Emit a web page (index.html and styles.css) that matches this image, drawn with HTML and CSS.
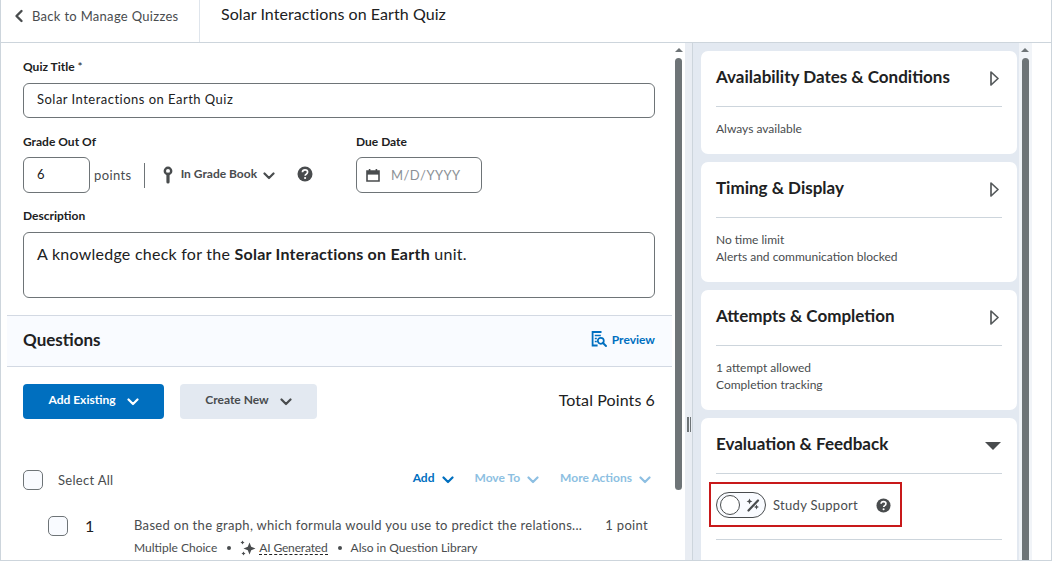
FILE: index.html
```html
<!DOCTYPE html>
<html lang="en">
<head>
<meta charset="utf-8">
<title>Solar Interactions on Earth Quiz</title>
<link rel="stylesheet" href="styles.css">
</head>
<body>
<div class="app">
  <header class="topbar">
    <a class="back">
      <svg class="back-icon" viewBox="0 0 10 14"><path d="M7.500 2 2.500 7l5 5" fill="none" stroke="#494c4e" stroke-width="2.400" stroke-linecap="round" stroke-linejoin="round"/></svg>
      <span>Back to Manage Quizzes</span>
    </a>
    <h1 class="page-title">Solar Interactions on Earth Quiz</h1>
  </header>
  <div class="main">
    <section class="left">
      <div class="left-scroll">
        <div class="form">
          <label class="label label-title">Quiz Title <span class="star">*</span></label>
          <div class="input input-title">Solar Interactions on Earth Quiz</div>
          <div class="grade-row">
            <div class="grade-col">
              <label class="label">Grade Out Of</label>
              <div class="grade-controls">
                <div class="input input-grade">6</div>
                <span class="points">points</span>
                <span class="vsep"></span>
                <svg class="pin" viewBox="0 0 10 18"><circle cx="5" cy="5" r="3.200" fill="none" stroke="#494c4e" stroke-width="2.400"/><path d="M5 8v8" stroke="#494c4e" stroke-width="3.200" stroke-linecap="round"/></svg>
                <span class="gradebook">In Grade Book</span>
                <svg class="chev" viewBox="0 0 12 8"><path d="M1.500 1.500 6 6l4.500-4.500" fill="none" stroke="#494c4e" stroke-width="2.200" stroke-linecap="round" stroke-linejoin="round"/></svg>
                <svg class="help help-grade" viewBox="0 0 16 16"><use href="#help"/></svg>
              </div>
            </div>
            <div class="due-col">
              <label class="label">Due Date</label>
              <div class="input input-date">
                <svg class="cal" viewBox="0 0 14 14"><path d="M1 3h12v10H1z" fill="none" stroke="#494c4e" stroke-width="1.600"/><path d="M1 3h12v3.600H1z" fill="#494c4e"/><path d="M3.600 1v2.600M10.400 1v2.600" stroke="#494c4e" stroke-width="1.600"/></svg>
                <span class="placeholder">M/D/YYYY</span>
              </div>
            </div>
          </div>
          <label class="label label-desc">Description</label>
          <div class="input input-desc">A knowledge check for the <b>Solar Interactions on Earth</b> unit.</div>
        </div>
        <div class="band">
          <h2 class="band-title">Questions</h2>
          <a class="preview">
            <svg class="preview-icon" viewBox="0 0 16 16"><path d="M10.500 1H1.600v13.500h5" fill="none" stroke="#006fbf" stroke-width="1.800"/><path d="M3.800 4.600h6M3.800 7.600h2M3.800 10.600h2" stroke="#006fbf" stroke-width="1.500"/><circle cx="9.800" cy="9.800" r="3" fill="none" stroke="#006fbf" stroke-width="1.700"/><path d="m12 12 3 3" stroke="#006fbf" stroke-width="1.900" stroke-linecap="round"/></svg>
            Preview
          </a>
        </div>
        <div class="actions">
          <button class="btn btn-primary">Add Existing
            <svg class="btn-chev" viewBox="0 0 12 8"><path d="M1.500 1.500 6 6l4.500-4.500" fill="none" stroke="#fff" stroke-width="2.200" stroke-linecap="round" stroke-linejoin="round"/></svg>
          </button>
          <button class="btn btn-secondary">Create New
            <svg class="btn-chev" viewBox="0 0 12 8"><path d="M1.500 1.500 6 6l4.500-4.500" fill="none" stroke="#494c4e" stroke-width="2.200" stroke-linecap="round" stroke-linejoin="round"/></svg>
          </button>
          <span class="total">Total Points 6</span>
        </div>
        <div class="select-row">
          <span class="check"></span>
          <span class="select-label">Select All</span>
          <div class="menu">
            <a class="menu-item">Add<svg class="menu-chev" viewBox="0 0 12 8"><path d="M1.500 1.500 6 6l4.500-4.500" fill="none" stroke="#006fbf" stroke-width="2.200" stroke-linecap="round" stroke-linejoin="round"/></svg></a>
            <a class="menu-item is-disabled">Move To<svg class="menu-chev" viewBox="0 0 12 8"><path d="M1.500 1.500 6 6l4.500-4.500" fill="none" stroke="#8dbfe2" stroke-width="2.200" stroke-linecap="round" stroke-linejoin="round"/></svg></a>
            <a class="menu-item is-disabled">More Actions<svg class="menu-chev" viewBox="0 0 12 8"><path d="M1.500 1.500 6 6l4.500-4.500" fill="none" stroke="#8dbfe2" stroke-width="2.200" stroke-linecap="round" stroke-linejoin="round"/></svg></a>
          </div>
        </div>
        <div class="q-row">
          <span class="check"></span>
          <span class="q-num">1</span>
          <div class="q-body">
            <div class="q-top">
              <span class="q-text">Based on the graph, which formula would you use to predict the relations...</span>
              <span class="q-points">1 point</span>
            </div>
            <div class="q-meta">
              <span>Multiple Choice</span>
              <span class="dot"></span>
              <svg class="spark" viewBox="0 0 16 16"><path d="M9.500 2.500 11.200 6.800 15.500 8.500 11.200 10.200 9.500 14.500 7.800 10.200 3.500 8.500 7.800 6.800z" fill="#494c4e"/><path d="M2.500 .5l.7 1.300 1.300.7-1.300.7-.7 1.300-.7-1.300-1.300-.7 1.300-.7zM3.500 11.500l.7 1.300 1.300.7-1.300.7-.7 1.300-.7-1.300-1.300-.7 1.300-.7z" fill="#494c4e"/></svg>
              <span class="ai">AI Generated</span>
              <span class="dot"></span>
              <span>Also in Question Library</span>
            </div>
          </div>
        </div>
      </div>
      <div class="scrollbar scrollbar-left"><span class="arrow"></span><span class="thumb thumb-left"></span></div>
    </section>
    <div class="splitter"><span class="grip"></span></div>
    <aside class="right">
      <div class="cards">
        <article class="card">
          <div class="card-head"><h3 class="card-title">Availability Dates &amp; Conditions</h3><svg class="tri" viewBox="0 0 9 15"><use href="#tri"/></svg></div>
          <div class="card-body card-body-short"><p>Always available</p></div>
        </article>
        <article class="card">
          <div class="card-head"><h3 class="card-title">Timing &amp; Display</h3><svg class="tri" viewBox="0 0 9 15"><use href="#tri"/></svg></div>
          <div class="card-body"><p>No time limit</p><p>Alerts and communication blocked</p></div>
        </article>
        <article class="card">
          <div class="card-head"><h3 class="card-title">Attempts &amp; Completion</h3><svg class="tri" viewBox="0 0 9 15"><use href="#tri"/></svg></div>
          <div class="card-body"><p>1 attempt allowed</p><p>Completion tracking</p></div>
        </article>
        <article class="card card-open">
          <div class="card-head"><h3 class="card-title">Evaluation &amp; Feedback</h3><span class="tri-down"></span></div>
          <div class="support-wrap">
            <div class="support">
              <span class="toggle">
                <span class="knob"></span>
                <svg class="wand" viewBox="0 0 14 14"><path d="M2.500 12.500 12 2.500" stroke="#494c4e" stroke-width="2.200" stroke-linecap="round"/><path d="M3.500 .5l.9 2 2 .9-2 .9-.9 2-.9-2-2-.9 2-.9zM10.500 6.500l.8 1.700 1.700.8-1.700.8-.8 1.700-.8-1.700-1.700-.8 1.700-.8z" fill="#494c4e"/></svg>
              </span>
              <span class="support-label">Study Support</span>
              <svg class="help help-support" viewBox="0 0 16 16"><use href="#help"/></svg>
            </div>
          </div>
        </article>
      </div>
      <div class="scrollbar scrollbar-right"><span class="arrow"></span><span class="thumb thumb-right"></span></div>
    </aside>
  </div>
</div>
<svg class="defs" width="0" height="0">
  <defs>
    <g id="help"><circle cx="8" cy="8" r="7.500" fill="#494c4e"/><path d="M5.400 6.200C5.500 4.700 6.600 3.900 8 3.900c1.500 0 2.600.9 2.600 2.200 0 1.100-.6 1.600-1.400 2.100-.7.400-1 .8-1 1.500" fill="none" stroke="#fff" stroke-width="1.700"/><circle cx="8.100" cy="12" r="1.100" fill="#fff"/></g>
    <g id="tri"><path d="M1 1 8 7.500 1 14z" fill="none" stroke="#565a5c" stroke-width="1.700" stroke-linejoin="round"/></g>
  </defs>
</svg>
</body>
</html>
```

FILE: styles.css
```css
* { box-sizing: border-box; }
html, body { margin: 0; padding: 0; }
body { width: 1053px; height: 561px; overflow: hidden; background: #fff; font-family: Lato, "Open Sans", sans-serif; color: #202122; }
.app { width: 1052px; height: 561px; border: 1px solid #cdd5dc; border-top: 0; display: flex; flex-direction: column; overflow: hidden; background: #fff; position: relative; }
.defs { position: absolute; }

.topbar { height: 43px; flex: none; display: flex; border-bottom: 1px solid #cdd5dc; }
.back { width: 199px; border-right: 1px solid #dfe5ec; display: flex; align-items: center; padding: 0 0 11px 13px; gap: 8px; font-size: 13px; color: #494c4e; letter-spacing: .3px; }
.back-icon { width: 10px; height: 14px; flex: none; }
.page-title { margin: 0; font-size: 16px; font-weight: 400; padding: 3px 0 0 21px; line-height: 22px; letter-spacing: .07px; color: #202122; }

.main { flex: 1; display: flex; min-height: 0; }
.left { width: 684px; flex: none; display: flex; overflow: hidden; }
.left-scroll { width: 671px; flex: none; padding-left: 6px; }
.form { padding: 16px 17px 0 16px; }
.label { display: block; font-size: 12px; font-weight: 700; line-height: 16px; color: #202122; }
.star { font-weight: 400; }
.input { border: 1px solid #6e7477; border-radius: 6px; background: #fff; }
.input-title { height: 35px; margin-top: 8px; padding: 0 13px; font-size: 13px; line-height: 31px; letter-spacing: .48px; color: #202122; }

.grade-row { display: flex; margin-top: 16px; }
.grade-col { width: 333px; }
.grade-controls { display: flex; align-items: center; margin-top: 7px; }
.input-grade { width: 67px; height: 36px; padding-left: 13px; font-size: 13px; line-height: 33px; }
.points { margin-left: 4px; font-size: 13px; color: #494c4e; letter-spacing: .4px; }
.vsep { width: 1px; height: 25px; background: #6e7477; margin-left: 12px; }
.pin { width: 10px; height: 18px; margin-left: 18px; flex: none; }
.gradebook { margin-left: 8px; margin-bottom: 4px; font-size: 12px; font-weight: 700; color: #494c4e; }
.chev { width: 12px; height: 8px; margin-left: 6px; margin-top: 2px; flex: none; }
.help { flex: none; }
.help-grade { width: 16px; height: 16px; margin-left: 22px; margin-bottom: 2px; }
.due-col { width: 126px; }
.input-date { width: 126px; height: 36px; margin-top: 7px; display: flex; align-items: center; padding-left: 9px; gap: 11px; }
.cal { width: 14px; height: 14px; flex: none; }
.placeholder { font-size: 13px; color: #8b9196; letter-spacing: .45px; }

.label-desc { margin-top: 15px; }
.input-desc { height: 66px; margin-top: 8px; padding: 10px 13px; font-size: 16px; line-height: 22px; letter-spacing: .25px; color: #202122; }
.input-desc b { font-weight: 700; }

.band { height: 52px; margin-top: 17px; border-top: 1px solid #d3d9e3; border-bottom: 1px solid #d3d9e3; background: #f9fbff; display: flex; align-items: center; justify-content: space-between; padding: 0 17px 4px 16px; }
.band-title { margin: 0; font-size: 17px; font-weight: 700; color: #202122; }
.preview { display: flex; align-items: center; gap: 5px; font-size: 12px; font-weight: 700; color: #006fbf; }
.preview-icon { width: 16px; height: 16px; }

.actions { display: flex; align-items: center; margin-top: 17px; padding: 0 17px 0 16px; gap: 16px; }
.btn { height: 35px; border: 0; border-radius: 4px; font: 700 12px Lato, sans-serif; display: flex; align-items: center; justify-content: center; gap: 11px; padding: 0 0 4px; }
.btn-primary { width: 141px; background: #006fbf; color: #fff; }
.btn-secondary { width: 137px; background: #e3e9f1; color: #494c4e; }
.btn-chev { width: 12px; height: 8px; margin-top: 5px; }
.total { margin-left: auto; padding-bottom: 4px; font-size: 16px; color: #202122; letter-spacing: .1px; }

.select-row { display: flex; align-items: center; margin-top: 51px; padding: 0 17px 0 16px; height: 20px; }
.check { width: 20px; height: 20px; border: 1px solid #6e7477; border-radius: 5px; background: #f9fbff; flex: none; }
.select-label { margin-left: 15px; font-size: 13px; color: #494c4e; letter-spacing: .3px; }
.menu { margin-left: auto; display: flex; gap: 21px; padding: 0 4px 6px 0; }
.menu-item { display: flex; align-items: center; gap: 7px; font-size: 12px; font-weight: 700; color: #006fbf; }
.is-disabled { color: #8dbfe2; }
.menu-chev { width: 12px; height: 8px; margin-top: 6px; }

.q-row { display: flex; margin-top: 26px; padding: 0 24px 0 41px; height: 44px; }
.q-num { width: 66px; flex: none; padding: 0 0 0 17px; font-size: 16px; line-height: 20px; color: #202122; }
.q-body { flex: 1; min-width: 0; }
.q-top { display: flex; justify-content: space-between; font-size: 13px; line-height: 18px; letter-spacing: .31px; color: #494c4e; }
.q-meta { display: flex; align-items: center; margin-top: 6px; font-size: 12px; line-height: 16px; color: #494c4e; }
.dot { width: 4px; height: 4px; border-radius: 50%; background: #494c4e; margin: 0 9px 0 10px; flex: none; }
.spark { width: 16px; height: 16px; margin-right: 3px; flex: none; }
.ai { border-bottom: 1px dashed #202122; line-height: 13px; letter-spacing: -.15px; }

.scrollbar { position: relative; flex: none; }
.arrow { position: absolute; top: 5px; width: 0; height: 0; border-left: 4px solid transparent; border-right: 4px solid transparent; border-bottom: 4px solid #6e7477; }
.thumb { position: absolute; top: 15px; width: 7px; background: #6e7477; border-radius: 4px; }
.scrollbar-left { width: 13px; }
.scrollbar-left .arrow { left: 3px; }
.thumb-left { left: 3px; height: 432px; }

.splitter { width: 8px; flex: none; background: #e9edf3; border-right: 1px solid #cdd5dc; position: relative; }
.grip { position: absolute; left: 2px; top: 374px; width: 4px; height: 15px; border-left: 2px solid #6e7477; border-right: 1px solid #6e7477; }

.right { flex: 1; display: flex; min-width: 0; background: #fff; }
.cards { width: 326px; flex: none; background: #e3e9f1; padding: 8px 2px 0 8px; display: flex; flex-direction: column; gap: 8px; overflow: hidden; }
.card { background: #fff; border-radius: 7px; padding: 0 15px; flex: none; }
.card-head { height: 56px; display: flex; align-items: center; justify-content: space-between; border-bottom: 1px solid #cdd5dc; padding-right: 3px; }
.card-title { margin: 0; font-size: 17px; font-weight: 700; color: #202122; padding-bottom: 4px; }
.tri { width: 9px; height: 15px; flex: none; }
.card-body { padding: 13px 0 0; height: 64px; }
.card-body-short { height: 47px; }
.card-body p { margin: 0; font-size: 12px; line-height: 17px; color: #494c4e; }
.tri-down { width: 0; height: 0; border-left: 8px solid transparent; border-right: 8px solid transparent; border-top: 8px solid #494c4e; margin-right: -2px; }
.card-open { height: 170px; }
.support-wrap { padding-top: 8px; height: 66px; border-bottom: 1px solid #cdd5dc; }
.support { width: 193px; height: 45px; margin-left: -7px; border: 2px solid #c8191a; display: flex; align-items: center; padding-left: 5px; }
.toggle { width: 50px; height: 26px; border: 1px solid #494c4e; border-radius: 13px; background: #f9fbff; position: relative; flex: none; }
.knob { position: absolute; left: 3px; top: 2px; width: 20px; height: 20px; border: 1px solid #494c4e; border-radius: 50%; background: #fff; }
.wand { position: absolute; left: 29px; top: 5px; width: 14px; height: 14px; }
.support-label { margin-left: 7px; font-size: 13px; color: #494c4e; letter-spacing: .3px; }
.help-support { width: 15px; height: 15px; margin-left: 18px; margin-top: 2px; }

.scrollbar-right { width: 13px; background: #f1f4f8; }
.scrollbar-right .arrow { left: 2px; }
.thumb-right { left: 3px; height: 520px; border-radius: 4px 4px 0 0; }
```
